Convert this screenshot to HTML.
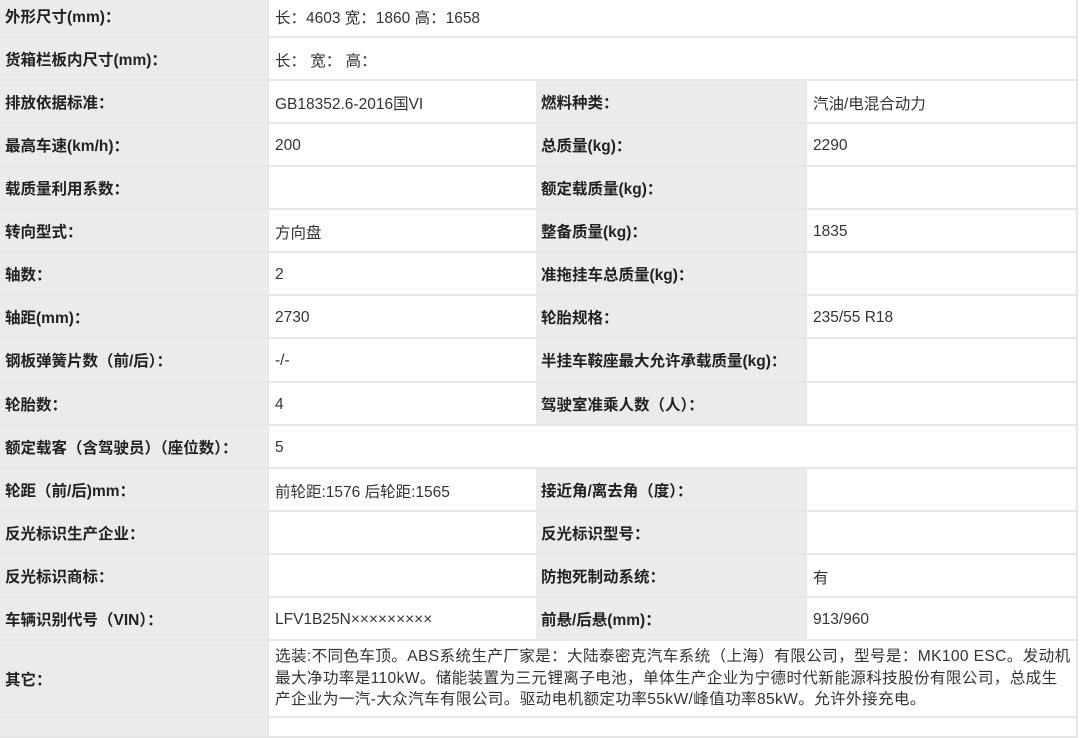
<!DOCTYPE html>
<html><head><meta charset="utf-8"><style>
body{margin:0;width:1080px;height:726px;overflow:hidden;background:#fff;font-family:"Liberation Sans","Noto Sans CJK SC",sans-serif;font-size:15.5px;color:#333;position:relative}
.c{position:absolute;box-sizing:border-box;border-bottom:2px solid #e6e6e6;display:flex;align-items:center;white-space:nowrap}
.l{background:#ebebeb;font-weight:bold;padding-left:5px;color:#222}
.v{background:#fff;padding-left:6px;border-left:1px solid #e6e6e6;padding-top:2px}
.r{border-right:2px solid #e6e6e6}
</style></head><body>
<div id="t"></div>
<script>
const rows=[
["外形尺寸(mm)：","长：4603 宽：1860 高：1658"],
["货箱栏板内尺寸(mm)：","长： 宽： 高："],
["排放依据标准：","GB18352.6-2016国VI","燃料种类：","汽油/电混合动力"],
["最高车速(km/h)：","200","总质量(kg)：","2290"],
["载质量利用系数：","","额定载质量(kg)：",""],
["转向型式：","方向盘","整备质量(kg)：","1835"],
["轴数：","2","准拖挂车总质量(kg)：",""],
["轴距(mm)：","2730","轮胎规格：","235/55 R18"],
["钢板弹簧片数（前/后）：","-/-","半挂车鞍座最大允许承载质量(kg)：",""],
["轮胎数：","4","驾驶室准乘人数（人）：",""],
["额定载客（含驾驶员）（座位数）：","5"],
["轮距（前/后)mm：","前轮距:1576 后轮距:1565","接近角/离去角（度）：",""],
["反光标识生产企业：","","反光标识型号：",""],
["反光标识商标：","","防抱死制动系统：","有"],
["车辆识别代号（VIN）：","LFV1B25N×××××××××","前悬/后悬(mm)：","913/960"]
];
const ys=[-5,38,81,124,167,210,253,296,339,383,426,469,512,555,598,641];
let h="";
rows.forEach((r,i)=>{const y=ys[i],hh=ys[i+1]-y;
h+=`<div class="c l" style="left:0;top:${y}px;width:268px;height:${hh}px">${r[0]}</div>`;
if(r.length==2){h+=`<div class="c v r" style="left:268px;top:${y}px;width:810px;height:${hh}px">${r[1]}</div>`;}
else{h+=`<div class="c v" style="left:268px;top:${y}px;width:268px;height:${hh}px">${r[1]}</div>`;
h+=`<div class="c l" style="left:536px;top:${y}px;width:270px;height:${hh}px">${r[2]}</div>`;
h+=`<div class="c v r" style="left:806px;top:${y}px;width:272px;height:${hh}px">${r[3]}</div>`;}
});
h+=`<div class="c l" style="left:0;top:641px;width:268px;height:77px">其它：</div>`;
h+=`<div class="c v r" style="left:268px;top:641px;width:810px;height:77px;line-height:21.5px;font-size:15.6px;letter-spacing:0.35px;padding-top:0"><div>选装:不同色车顶。ABS系统生产厂家是：大陆泰密克汽车系统（上海）有限公司，型号是：MK100 ESC。发动机<br>最大净功率是110kW。储能装置为三元锂离子电池，单体生产企业为宁德时代新能源科技股份有限公司，总成生<br>产企业为一汽-大众汽车有限公司。驱动电机额定功率55kW/峰值功率85kW。允许外接充电。</div></div>`;
h+=`<div class="c l" style="left:0;top:718px;width:268px;height:20px"></div><div class="c v r" style="left:268px;top:718px;width:810px;height:20px"></div>`;
document.getElementById("t").innerHTML=h;
</script>
</body></html>
